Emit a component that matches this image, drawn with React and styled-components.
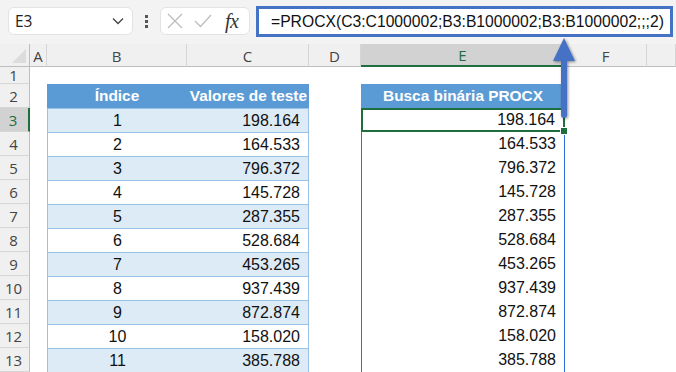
import React from 'react';
import styled, { createGlobalStyle } from 'styled-components';

const GlobalStyle = createGlobalStyle`
  html, body {
    margin: 0;
    padding: 0;
    background: #ffffff;
    overflow: hidden;
  }
`;

const Page = styled.div`
  position: relative;
  width: 676px;
  height: 372px;
  overflow: hidden;
  font-family: "Liberation Sans", Arial, sans-serif;
`;

const TopBar = styled.div`
  height: 44px;
  background: #f3f3f3;
  display: flex;
  align-items: center;
  padding-left: 8px;
  box-sizing: border-box;
`;

const NameBox = styled.div`
  width: 125px;
  height: 28px;
  margin-top: -2px;
  box-sizing: border-box;
  background: #fff;
  border: 1px solid #e3e3e3;
  border-radius: 6px;
  display: flex;
  align-items: center;
  justify-content: space-between;
  padding: 0 8px 0 6px;
  font-family: "Open Sans", "Noto Sans", sans-serif;
  font-size: 15.5px;
  color: #222;
`;

const Dots = styled.div`
  width: 27px;
  display: flex;
  flex-direction: column;
  align-items: center;
  gap: 2px;
  margin-top: -2px;
  span {
    width: 3px;
    height: 3px;
    background: #555;
  }
`;

const IconBox = styled.div`
  width: 90px;
  height: 28px;
  margin-top: -2px;
  box-sizing: border-box;
  background: #fff;
  border: 1px solid #e3e3e3;
  border-radius: 6px;
  display: flex;
  align-items: center;
  padding: 0 6px 0 6px;
  gap: 11px;
`;

const Fx = styled.span`
  font-family: "Liberation Serif", "Times New Roman", serif;
  font-style: italic;
  font-size: 20px;
  color: #333;
  margin-left: 2px;
  letter-spacing: -0.5px;
`;

const FormulaBox = styled.div`
  margin-left: 6px;
  height: 31px;
  width: 417px;
  margin-top: -1px;
  box-sizing: border-box;
  border: 3px solid #4472c4;
  background: #fff;
  display: flex;
  align-items: center;
  padding-left: 12px;
  font-family: "Liberation Sans", Arial, sans-serif;
  font-size: 15.7px;
  color: #111;
  white-space: nowrap;
`;

const Grid = styled.div`
  display: grid;
  grid-template-columns: 30px 17px 140px 122px 52px 204px 82px 1fr;
  grid-template-rows: 23px 17px repeat(12, 24px);
`;

const ColHead = styled.div`
  background: ${(p) => (p.$active ? '#d2d2d2' : '#f0f0f0')};
  color: ${(p) => (p.$active ? '#1e6e3e' : '#444')};
  border-right: 1px solid #d6d6d6;
  border-bottom: ${(p) => (p.$active ? '2px solid #1e6e3e' : '1px solid #bdbdbd')};
  box-sizing: border-box;
  display: flex;
  align-items: center;
  justify-content: center;
  font-family: "Open Sans", "Noto Sans", sans-serif;
  font-size: 15px;
  padding-top: 1px;
`;

const Corner = styled.div`
  background: #f0f0f0;
  border-right: 1px solid #bdbdbd;
  border-bottom: 1px solid #bdbdbd;
  box-sizing: border-box;
  position: relative;
  &::after {
    content: '';
    position: absolute;
    right: 3px;
    bottom: 3px;
    border-style: solid;
    border-width: 0 0 14px 14px;
    border-color: transparent transparent #dcdcdc transparent;
  }
`;

const RowHead = styled.div`
  background: ${(p) => (p.$active ? '#d2d2d2' : '#f0f0f0')};
  color: ${(p) => (p.$active ? '#1e6e3e' : '#444')};
  border-right: ${(p) => (p.$active ? '2px solid #1e6e3e' : '1px solid #bdbdbd')};
  border-bottom: 1px solid #d6d6d6;
  box-sizing: border-box;
  display: flex;
  align-items: center;
  justify-content: center;
  font-family: "Open Sans", "Noto Sans", sans-serif;
  font-size: 15px;
  padding-right: 2px;
`;

const Cell = styled.div`
  box-sizing: border-box;
  background: #fff;
  display: flex;
  align-items: center;
  font-size: 16px;
  color: #111;
  padding: 0 8px;
  white-space: nowrap;
  justify-content: ${(p) => p.$align || 'flex-end'};
`;

const TableHead = styled(Cell)`
  background: #5b9bd5;
  color: #fff;
  font-weight: bold;
  font-size: 15.4px;
  justify-content: ${(p) => p.$align || 'center'};
  padding: 0 ${(p) => (p.$align === 'flex-end' ? '2px' : '8px')} 0 8px;
`;

const BandCell = styled(Cell)`
  background: ${(p) => (p.$band ? '#ddebf7' : '#fff')};
  border-top: 1px solid #9bc2e6;
  border-left: ${(p) => (p.$first ? '1px solid #9bc2e6' : 'none')};
  border-right: ${(p) => (p.$last ? '1px solid #9bc2e6' : 'none')};
`;

const ResultCell = styled(Cell)`
  position: relative;
  border-left: 1px solid #2f6fd6;
  border-right: 1px solid #2f6fd6;
  ${(p) =>
    p.$selected &&
    `
    border: 2px solid #1e6e3e;
    &::after {
      content: '';
      position: absolute;
      right: -5px;
      bottom: -5px;
      width: 6px;
      height: 6px;
      background: #1e6e3e;
      border: 1px solid #fff;
      z-index: 2;
    }
  `}
`;

const ArrowLayer = styled.svg`
  position: absolute;
  left: 545px;
  top: 34px;
  overflow: visible;
`;

const Chevron = () => (
  <svg width="12" height="8" viewBox="0 0 12 8">
    <path d="M1 1.5 L6 6.5 L11 1.5" fill="none" stroke="#444" strokeWidth="1.3" />
  </svg>
);

const Cross = () => (
  <svg width="16" height="16" viewBox="0 0 16 16">
    <path d="M1 1 L15 15 M15 1 L1 15" stroke="#bdbdbd" strokeWidth="1.3" />
  </svg>
);

const Check = () => (
  <svg width="18" height="14" viewBox="0 0 18 14">
    <path d="M1 7 L6.5 12.5 L17 1" fill="none" stroke="#bdbdbd" strokeWidth="1.3" />
  </svg>
);

const rows = [
  [1, '198.164'],
  [2, '164.533'],
  [3, '796.372'],
  [4, '145.728'],
  [5, '287.355'],
  [6, '528.684'],
  [7, '453.265'],
  [8, '937.439'],
  [9, '872.874'],
  [10, '158.020'],
  [11, '385.788'],
];

const letters = ['A', 'B', 'C', 'D', 'E', 'F', ''];

const App = () => {
  return (
    <Page>
      <GlobalStyle />
      <TopBar>
        <NameBox>
          <span>E3</span>
          <Chevron />
        </NameBox>
        <Dots>
          <span />
          <span />
          <span />
        </Dots>
        <IconBox>
          <Cross />
          <Check />
          <Fx>fx</Fx>
        </IconBox>
        <FormulaBox>=PROCX(C3:C1000002;B3:B1000002;B3:B1000002;;;2)</FormulaBox>
      </TopBar>

      <Grid>
        <Corner />
        {letters.map((l, i) => (
          <ColHead key={i} $active={l === 'E'}>{l}</ColHead>
        ))}

        <RowHead>1</RowHead>
        {letters.map((l, i) => (
          <Cell key={i} />
        ))}

        <RowHead>2</RowHead>
        <Cell />
        <TableHead>Índice</TableHead>
        <TableHead $align="flex-end">Valores de teste</TableHead>
        <Cell />
        <TableHead>Busca binária PROCX</TableHead>
        <Cell />
        <Cell />

        {rows.map(([idx, val], i) => (
          <React.Fragment key={idx}>
            <RowHead $active={i === 0}>{i + 3}</RowHead>
            <Cell />
            <BandCell $band={i % 2 === 0} $first $align="center">{idx}</BandCell>
            <BandCell $band={i % 2 === 0} $last>{val}</BandCell>
            <Cell />
            <ResultCell $selected={i === 0}>{val}</ResultCell>
            <Cell />
            <Cell />
          </React.Fragment>
        ))}
      </Grid>

      <ArrowLayer width="40" height="90" viewBox="0 0 40 90">
        <defs>
          <filter id="sh" x="-50%" y="-20%" width="200%" height="150%">
            <feGaussianBlur in="SourceAlpha" stdDeviation="1.5" />
            <feOffset dx="1" dy="1" result="b" />
            <feComponentTransfer>
              <feFuncA type="linear" slope="0.45" />
            </feComponentTransfer>
            <feMerge>
              <feMergeNode />
              <feMergeNode in="SourceGraphic" />
            </feMerge>
          </filter>
        </defs>
        <path
          d="M19 4 L30 27 L22 27 L22 81 Q22 84 19 84 Q16 84 16 81 L16 27 L8 27 Z"
          fill="#4472c4"
          filter="url(#sh)"
        />
      </ArrowLayer>
    </Page>
  );
};

export default App;
